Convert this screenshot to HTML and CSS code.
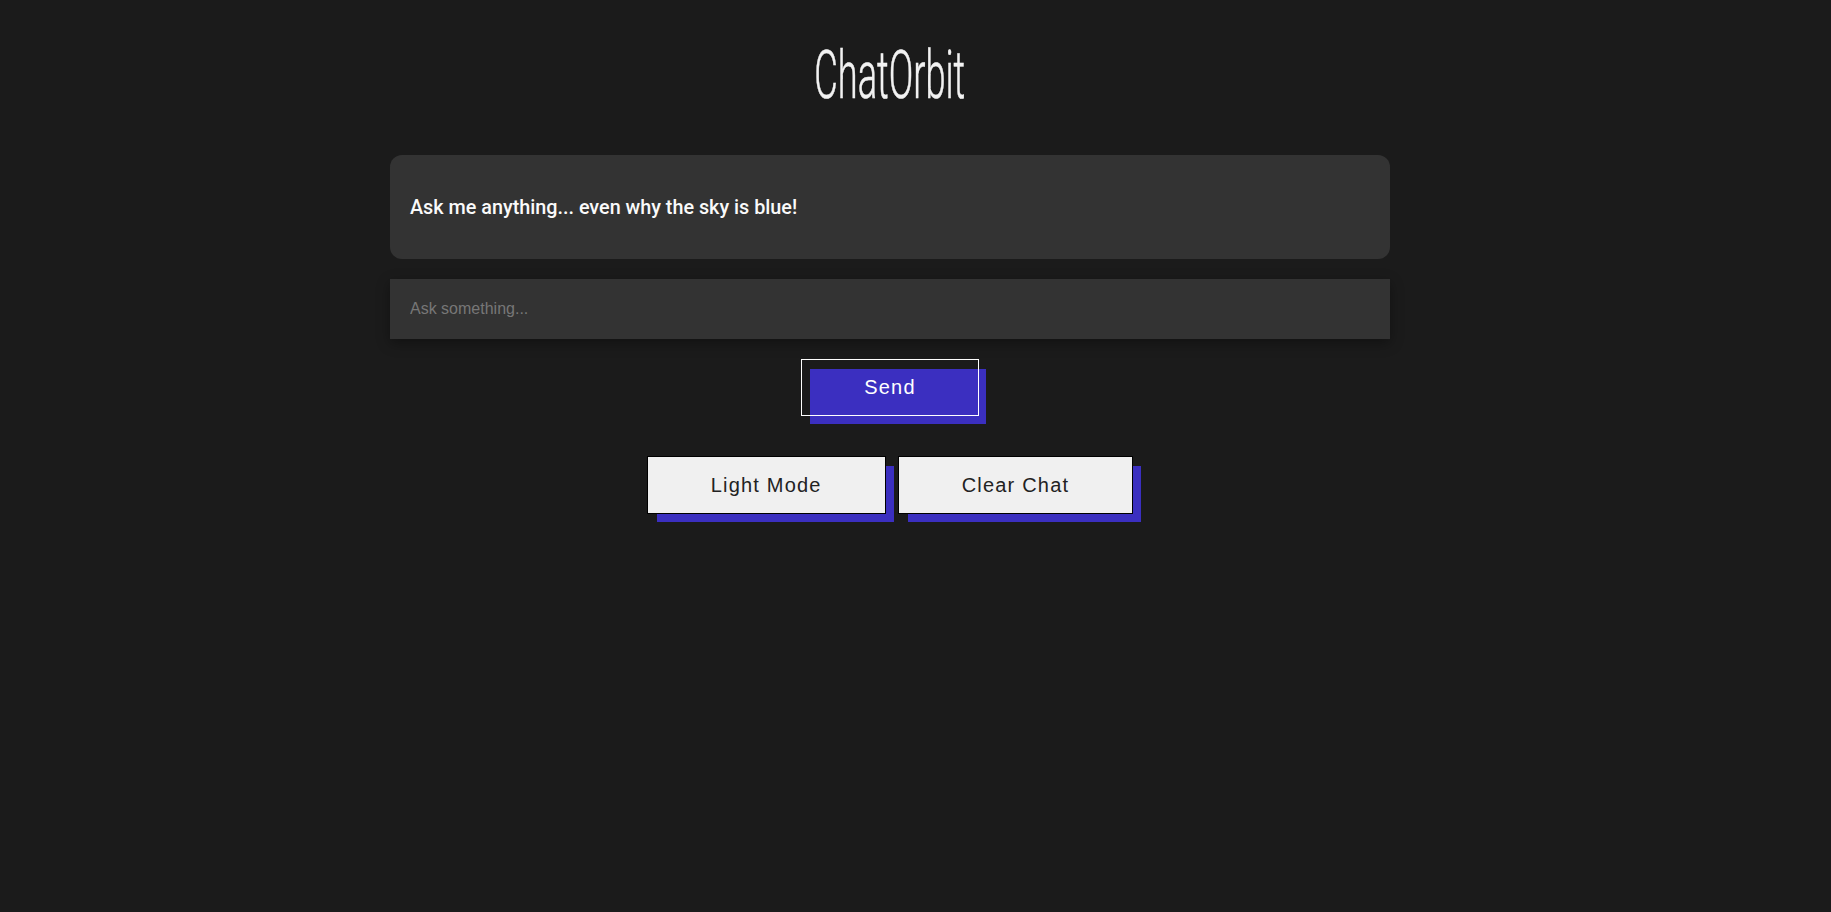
FILE: index.html
```html
<!DOCTYPE html>
<html lang="en">
<head>
<meta charset="utf-8">
<title>ChatOrbit</title>
<link rel="stylesheet" href="styles.css">
</head>
<body>
<div class="app">
  <h1 class="title"><span class="title-text">ChatOrbit</span></h1>
  <main class="chat">
    <div class="messages">
      <p class="message">Ask me anything... even why the sky is blue!</p>
    </div>
    <input class="prompt" type="text" placeholder="Ask something...">
    <div class="send-row">
      <button class="btn btn-send">Send</button>
    </div>
    <div class="actions">
      <button class="btn btn-light">Light Mode</button>
      <button class="btn btn-light">Clear Chat</button>
    </div>
  </main>
</div>
</body>
</html>
```
FILE: styles.css
```css
html, body {
  margin: 0;
  padding: 0;
  background: #1b1b1b;
}

body {
  font-family: "Liberation Sans", Arial, sans-serif;
  color: #fff;
  min-height: 100vh;
}

.app {
  width: 1780px;
  padding: 42px 0 60px;
}

.title {
  margin: 0 0 47px;
  height: 66px;
  display: flex;
  justify-content: center;
  font-family: Roboto, "Liberation Sans", sans-serif;
  font-weight: 300;
  font-size: 67px;
  line-height: 1;
  color: #f2f2f2;
}

.title-text {
  display: inline-block;
  transform: scaleX(0.54);
  transform-origin: center;
  -webkit-text-stroke: 0.6px #f2f2f2;
}

.chat {
  width: 1000px;
  margin: 0 auto;
  display: flex;
  flex-direction: column;
}

.messages {
  background: #333;
  border-radius: 12px;
  padding: 40px 20px;
  margin-bottom: 20px;
}

.message {
  margin: 0;
  padding-top: 1px;
  font-family: Roboto, "Liberation Sans", sans-serif;
  font-weight: 500;
  font-size: 19.8px;
  line-height: 23px;
  color: #fafafa;
}

.prompt {
  box-sizing: border-box;
  width: 100%;
  height: 60px;
  margin: 0 0 20px;
  padding: 0 20px;
  border: none;
  outline: none;
  background: #333;
  color: #fff;
  font-family: "Liberation Sans", Arial, sans-serif;
  font-size: 16px;
  box-shadow: 0 4px 12px rgba(0, 0, 0, 0.35);
}

.prompt::placeholder {
  color: #777;
}

.send-row {
  display: flex;
  justify-content: center;
  margin-bottom: 40px;
}

.actions {
  display: flex;
  justify-content: center;
  gap: 12px;
}

.btn {
  box-sizing: border-box;
  padding: 0 63px;
  font-family: "Liberation Sans", Arial, sans-serif;
  font-size: 20px;
  letter-spacing: 1.2px;
  cursor: pointer;
}

.btn-send {
  position: relative;
  z-index: 0;
  height: 57px;
  padding: 0 62px;
  background: transparent;
  border: 1px solid transparent;
  outline: 1px solid #fff;
  outline-offset: -1px;
  color: #fff;
}

.btn-send::before {
  content: "";
  position: absolute;
  z-index: -1;
  left: 8px;
  top: 9px;
  width: 100%;
  height: 100%;
  background: #3b2fc0;
}

.btn-light {
  height: 58px;
  background: #f0f0f0;
  border: 1px solid #000;
  color: #222;
  box-shadow: 9px 9px 0 -1px #3b2fc0;
}
```
